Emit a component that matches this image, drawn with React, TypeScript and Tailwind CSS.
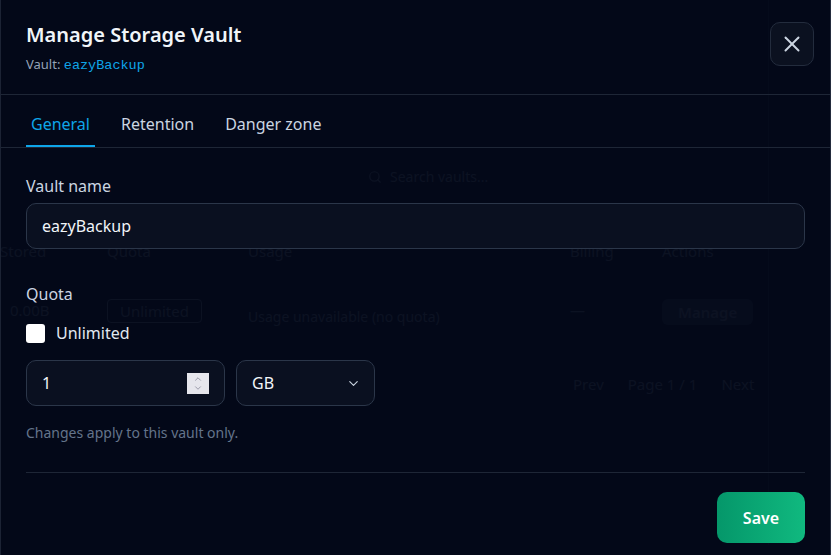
import { useState } from 'react';
import { X, ChevronDown, ChevronUp, Search } from 'lucide-react';

const tabs = ['General', 'Retention', 'Danger zone'];

// faint page behind the modal
const BackgroundPage = () => (
  <div className="w-[769px] border-r border-[#2c3546] pt-[167px] pb-[150px] text-[#94a3b8]">
    <div className="ml-[368px] flex items-center gap-2 text-sm">
      <Search size={14} />
      <span>Search vaults...</span>
    </div>
    <div className="mt-[53px] grid grid-cols-[107px_141px_322px_92px_1fr] text-[15px]">
      <span>Stored</span>
      <span>Quota</span>
      <span>Usage</span>
      <span>Billing</span>
      <span>Actions</span>
    </div>
    <div className="mt-[36px] grid grid-cols-[107px_141px_322px_92px_1fr] items-start text-[15px]">
      <span className="pl-[10px]">0.00B</span>
      <span className="w-fit rounded border border-[#94a3b8] px-3">Unlimited</span>
      <span className="pt-2 text-sm">Usage unavailable (no quota)</span>
      <span>—</span>
      <span className="w-fit rounded-md bg-[#94a3b8]/40 px-4 py-0.5 font-semibold">Manage</span>
    </div>
    <div className="mt-[46px] flex items-center gap-6 pl-[573px] text-[15px]">
      <span>Prev</span>
      <span>Page 1 / 1</span>
      <span>Next</span>
    </div>
  </div>
);

export default function App() {
  const [active, setActive] = useState('General');

  return (
    <div className="relative h-[555px] w-full overflow-hidden bg-[#030818] font-['Noto_Sans',sans-serif]">
      <BackgroundPage />

      <div className="absolute inset-0 flex flex-col border-x border-l-[#1c2334] border-r-[#232b3c] bg-[#030818]/[0.94]">
        {/* Header */}
        <div className="flex items-start justify-between border-b border-[#1e2636] pb-[19px] pl-[25px] pr-[16px] pt-[21px]">
          <div>
            <h2 className="text-[20px] leading-7 font-semibold text-[#f1f5f9]">Manage Storage Vault</h2>
            <p className="mt-1.5 text-[13px] leading-[18px] text-[#94a3b8]">
              Vault: <span className="font-['Liberation_Mono',monospace] text-[13.5px] text-[#0ea5e9]">eazyBackup</span>
            </p>
          </div>
          <button className="mt-px flex h-[44px] w-[44px] items-center justify-center rounded-[10px] border border-[#232c3d] bg-[#0b1120] text-[#cbd5e1]">
            <X size={26} strokeWidth={1.8} />
          </button>
        </div>

        {/* Tabs */}
        <div className="flex gap-[21px] border-b border-[#1e2636] px-[25px] pt-[17px]">
          {tabs.map((t) => (
            <button
              key={t}
              onClick={() => setActive(t)}
              className={`border-b-2 px-[5px] pb-[9px] text-base leading-6 ${active === t ? 'border-[#0ea5e9] text-[#0ea5e9]' : 'border-transparent text-[#cbd5e1]'}`}
            >
              {t}
            </button>
          ))}
        </div>

        {/* Body */}
        <div className="px-[25px] pt-[26px]">
          <label className="block text-base leading-6 text-[#cbd5e1]">Vault name</label>
          <div className="mt-[5px] flex h-[46px] items-center rounded-[10px] border border-[#2b3649] bg-[#0a1020] px-[15px] text-base text-[#f1f5f9]">
            eazyBackup
          </div>

          <label className="mt-[33px] block text-base leading-6 text-[#cbd5e1]">Quota</label>
          <div className="mt-[15px] flex items-center gap-[11px]">
            <span className="h-[19px] w-[19px] rounded-[3px] bg-white" />
            <span className="text-base leading-6 text-[#e2e8f0]">Unlimited</span>
          </div>

          <div className="mt-[15px] flex gap-[11px]">
            <div className="flex h-[46px] w-[199px] items-center justify-between rounded-[10px] border border-[#2b3649] bg-[#0a1020] pl-[15px] pr-[15px] text-base text-[#f1f5f9]">
              <span>1</span>
              <span className="flex h-[21px] w-[22px] flex-col items-center justify-center bg-[#e6e6ec] text-[#8d8d9c]">
                <ChevronUp size={10} strokeWidth={2} className="-mb-[1px]" />
                <ChevronDown size={10} strokeWidth={2} />
              </span>
            </div>
            <div className="flex h-[46px] w-[139px] items-center justify-between rounded-[10px] border border-[#2b3649] bg-[#0a1020] pl-[15px] pr-[13px] text-base text-[#f1f5f9]">
              <span>GB</span>
              <ChevronDown size={15} strokeWidth={1.8} className="text-[#cbd5e1]" />
            </div>
          </div>

          <p className="mt-[17px] text-sm leading-5 text-[#64748b]">Changes apply to this vault only.</p>

          <div className="mt-[29px] border-t border-[#1e2636]" />

          <div className="flex justify-end pt-[19px]">
            <button className="h-[51px] w-[88px] rounded-[10px] bg-gradient-to-r from-[#05976a] to-[#10b97f] text-base font-semibold text-white">
              Save
            </button>
          </div>
        </div>
      </div>
    </div>
  );
}
